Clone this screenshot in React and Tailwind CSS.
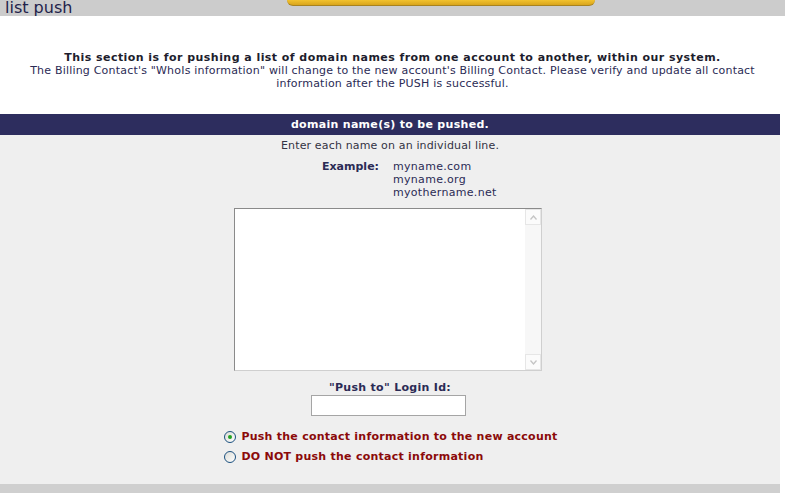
import React from 'react';

// --- Example domains shown next to the label ---
const examples = ['myname.com', 'myname.org', 'myothername.net'];

function Radio({ checked, children }) {
  return (
    <label className="flex items-center gap-[5px] h-[14px]">
      <span className="flex items-center justify-center w-[12px] h-[12px] rounded-full border border-[#1c5180] bg-gradient-to-br from-[#dcdcd6] to-white">
        {checked && <span className="w-[4px] h-[4px] rounded-full bg-[#21a121]" />}
      </span>
      <span className="text-[11px] font-bold text-[#8b0a0a] leading-[14px] tracking-[0.25px]">{children}</span>
    </label>
  );
}

function Chevron({ up }) {
  return (
    <svg width="7" height="5" viewBox="0 0 7 5">
      <path d={up ? 'M0.5 4.5 L3.5 1 L6.5 4.5' : 'M0.5 0.5 L3.5 4 L6.5 0.5'} fill="none" stroke="#c4c4c4" strokeWidth="1.3" />
    </svg>
  );
}

export default function App() {
  return (
    <div className="w-[785px] h-[493px] bg-white overflow-hidden" style={{ fontFamily: '"DejaVu Sans", Verdana, sans-serif' }}>
      {/* --- Title bar --- */}
      <div className="relative h-[16px] bg-[#cccccc]">
        <span className="absolute left-[5px] top-0 text-[16px] leading-[16px] text-[#22224a]">list push</span>
        <div className="absolute left-[287px] top-0 w-[308px] h-[6px] rounded-b-[6px] bg-gradient-to-b from-[#f2c22e] to-[#d9a51c] border-b border-[#a88320]" />
      </div>

      {/* --- Intro --- */}
      <div className="pt-[35px] pb-[24px] px-[16px] text-center text-[11px] leading-[13px] text-[#2b2b55]">
        <div className="font-bold text-[#1d1d2d] tracking-[0.45px]">
          This section is for pushing a list of domain names from one account to another, within our system.
        </div>
        <div className="tracking-[0.2px]">
          The Billing Contact's "WhoIs information" will change to the new account's Billing Contact. Please verify and update all contact information after the PUSH is successful.
        </div>
      </div>

      <div className="w-[780px]">
        {/* --- Section header --- */}
        <div className="h-[21px] bg-[#2d2d5e] text-center text-[11px] leading-[21px] font-bold text-white tracking-[0.3px]">
          domain name(s) to be pushed.
        </div>

        {/* --- Form body --- */}
        <div className="h-[349px] bg-[#efefef] flex flex-col items-center pt-[4px] text-[11px] leading-[13px]">
          <div className="text-[#333344] tracking-[0.15px]">Enter each name on an individual line.</div>

          <div className="flex mt-[8px] w-full">
            <div className="w-[379px] text-right font-bold text-[#2b2b55]">Example:</div>
            <div className="ml-[14px] text-[#2b2b55] tracking-[0.3px]">
              {examples.map((d) => (
                <div key={d}>{d}</div>
              ))}
            </div>
          </div>

          <div className="mt-[9px] ml-[-4px] flex w-[308px] h-[163px] bg-white border border-[#8a8a8a] border-r-[#cfcfcf] border-b-[#cfcfcf]">
            <textarea className="flex-1 h-full bg-white resize-none overflow-hidden outline-none" defaultValue="" />
            <div className="w-[16px] h-full flex flex-col justify-between bg-[#f7f7f7]">
              <div className="h-[16px] flex items-center justify-center border border-[#e6e6e6] bg-[#fbfbfb]">
                <Chevron up />
              </div>
              <div className="h-[16px] flex items-center justify-center border border-[#e6e6e6] bg-[#fbfbfb]">
                <Chevron />
              </div>
            </div>
          </div>

          <div className="mt-[10px] font-bold text-[#2b2b55] tracking-[0.3px]">"Push to" Login Id:</div>
          <input className="mt-[1px] ml-[-3px] w-[155px] h-[21px] bg-white border border-[#a5a5a5] outline-none" />

          <div className="mt-[14px] flex flex-col gap-[6px] ml-[2px]">
            <Radio checked>Push the contact information to the new account</Radio>
            <Radio>DO NOT push the contact information</Radio>
          </div>
        </div>

        {/* --- Footer strip --- */}
        <div className="h-[9px] bg-[#cfcfcf]" />
      </div>
    </div>
  );
}
